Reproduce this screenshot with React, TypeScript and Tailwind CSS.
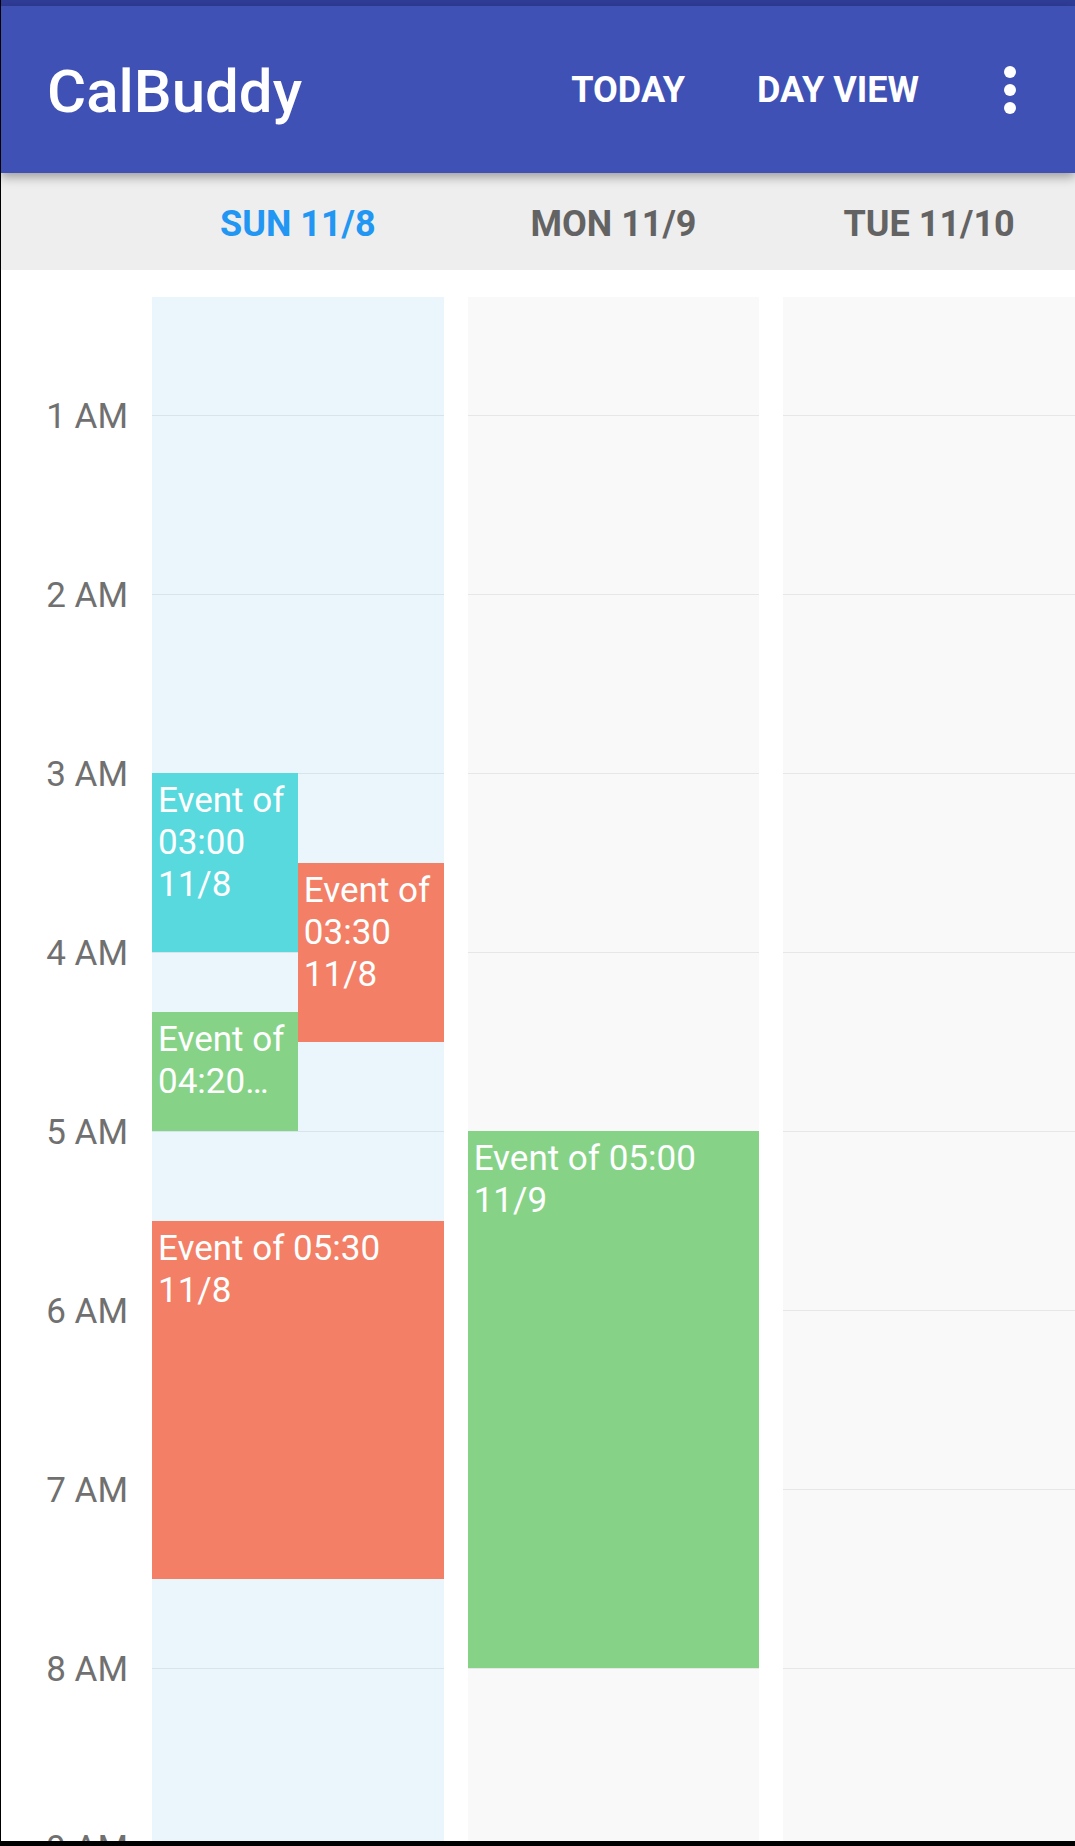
import React from 'react';

type CalEvent = {
  label: string;
  start: number;
  end: number;
  color: string;
  half?: 'left' | 'right';
  clamp?: boolean;
};

const HOUR = 179;
// y of 01:00 inside a day column (the view is scrolled a bit)
const FIRST_LINE = 118;

const hours = ['1 AM', '2 AM', '3 AM', '4 AM', '5 AM', '6 AM', '7 AM', '8 AM', '9 AM'];

const days: { title: string; today?: boolean; events: CalEvent[] }[] = [
  {
    title: 'SUN 11/8',
    today: true,
    events: [
      { label: 'Event of 03:00 11/8', start: 3, end: 4, color: 'bg-[#58d9dd]', half: 'left' },
      { label: 'Event of 03:30 11/8', start: 3.5, end: 4.5, color: 'bg-[#f38066]', half: 'right' },
      { label: 'Event of 04:20 11/8', start: 4 + 1 / 3, end: 5, color: 'bg-[#86d388]', half: 'left', clamp: true },
      { label: 'Event of 05:30 11/8', start: 5.5, end: 7.5, color: 'bg-[#f38066]' },
    ],
  },
  {
    title: 'MON 11/9',
    events: [{ label: 'Event of 05:00 11/9', start: 5, end: 8, color: 'bg-[#86d388]' }],
  },
  { title: 'TUE 11/10', events: [] },
];

const toY = (h: number) => FIRST_LINE + (h - 1) * HOUR;

function DayColumn({ today, events }: { today?: boolean; events: CalEvent[] }) {
  return (
    <div className={`relative h-full ${today ? 'bg-[#eaf6fc]' : 'bg-[#f9f9f9]'}`}>
      <div className="h-[118px]" />
      {hours.map((h) => (
        <div key={h} className="h-[179px] border-t border-[rgba(0,0,0,0.07)]" />
      ))}

      {events.map((e) => (
        <div
          key={e.label}
          className={`absolute ${e.color} ${
            e.half === 'left' ? 'left-0 w-1/2' : e.half === 'right' ? 'left-1/2 w-1/2' : 'left-0 right-0'
          } overflow-hidden px-[6px] pt-[7px] text-[35px] leading-[42px] text-white`}
          style={{ top: toY(e.start), height: (e.end - e.start) * HOUR }}
        >
          <p className={e.clamp ? 'line-clamp-2' : ''}>{e.label}</p>
        </div>
      ))}
    </div>
  );
}

export default function App() {
  return (
    <div className="w-[1075px] h-[1846px] flex flex-col overflow-hidden bg-white border-l border-black font-['Roboto',sans-serif]">
      {/* status strip */}
      <div className="h-[6px] shrink-0 bg-[#2f3d98]" />

      {/* App bar */}
      <header className="relative z-10 h-[167px] shrink-0 flex items-center bg-[#3f51b5] pl-[46px] pr-[59px] shadow-[0_4px_10px_rgba(0,0,0,0.35)]">
        <h1 className="pt-[4px] text-[60px] leading-none font-medium text-white">CalBuddy</h1>
        <div className="ml-auto flex items-center text-[36px] leading-none font-bold text-white">
          <span>TODAY</span>
          <span className="ml-[72px]">DAY VIEW</span>
          <div className="ml-[85px] flex flex-col gap-[6px]">
            <span className="block w-[12px] h-[12px] rounded-full bg-white" />
            <span className="block w-[12px] h-[12px] rounded-full bg-white" />
            <span className="block w-[12px] h-[12px] rounded-full bg-white" />
          </div>
        </div>
      </header>

      {/* Day header */}
      <div className="h-[97px] shrink-0 flex bg-[#eeeeee] pt-[4px]">
        <div className="w-[151px] shrink-0" />
        <div className="flex-1 grid grid-cols-3 gap-[24px] items-center">
          {days.map((d) => (
            <div
              key={d.title}
              className={`text-center text-[36px] leading-none font-bold ${d.today ? 'text-[#2196f3]' : 'text-[#636363]'}`}
            >
              {d.title}
            </div>
          ))}
        </div>
      </div>

      {/* Week body */}
      <div className="flex-1 min-h-0 overflow-hidden flex pt-[27px]">
        <div className="w-[151px] shrink-0">
          <div className="h-[30px]" />
          {hours.map((h) => (
            <div key={h} className="h-[179px] flex items-center justify-end pr-[24px] text-[35px] leading-none text-[#707070]">
              {h}
            </div>
          ))}
        </div>
        <div className="flex-1 grid grid-cols-3 gap-[24px]">
          {days.map((d) => (
            <DayColumn key={d.title} today={d.today} events={d.events} />
          ))}
        </div>
      </div>

      <div className="h-[5px] shrink-0 bg-black" />
    </div>
  );
}
